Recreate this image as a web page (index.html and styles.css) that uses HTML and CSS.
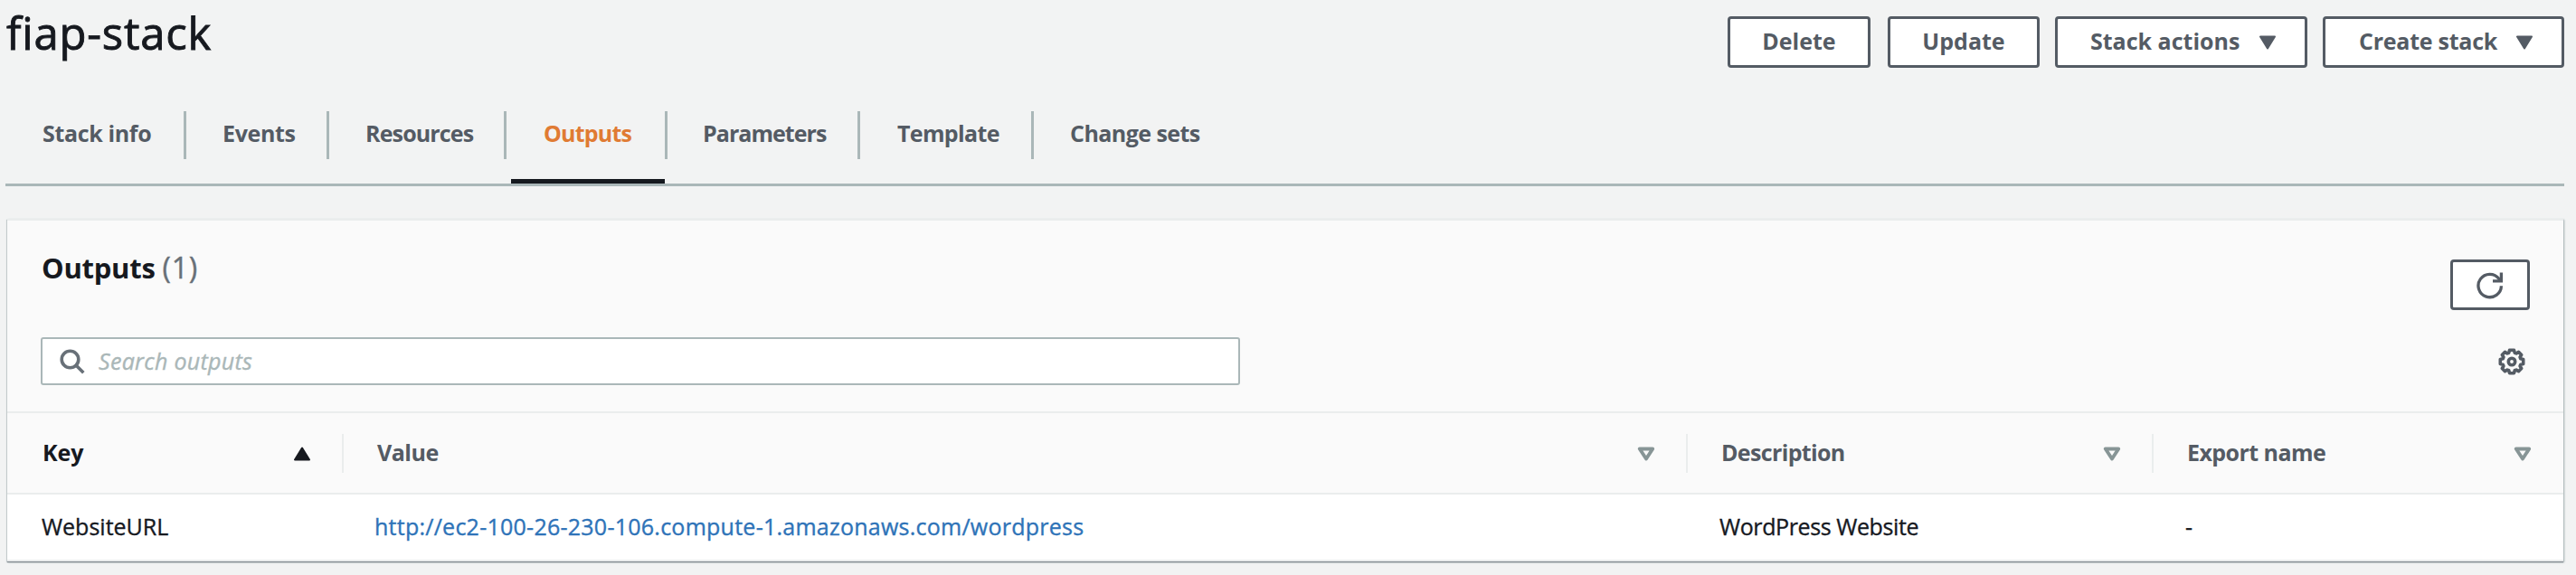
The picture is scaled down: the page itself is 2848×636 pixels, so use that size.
FILE: index.html
```html
<!DOCTYPE html>
<html lang="en">
<head>
<meta charset="utf-8">
<title>fiap-stack</title>
<link rel="stylesheet" href="styles.css">
</head>
<body>
<header class="page-header">
  <h1 class="title">fiap-stack</h1>
  <div class="actions">
    <button class="btn btn-delete">Delete</button>
    <button class="btn btn-update">Update</button>
    <button class="btn btn-menu btn-stack"><span>Stack actions</span><svg class="caret" viewBox="0 0 20 16"><path d="M2 1.500H18L10 14.500Z" fill="currentColor" stroke="currentColor" stroke-width="2" stroke-linejoin="round"/></svg></button>
    <button class="btn btn-menu btn-create"><span>Create stack</span><svg class="caret" viewBox="0 0 20 16"><path d="M2 1.500H18L10 14.500Z" fill="currentColor" stroke="currentColor" stroke-width="2" stroke-linejoin="round"/></svg></button>
  </div>
</header>
<nav class="tabs">
  <a class="tab tab-info"><span>Stack info</span></a>
  <a class="tab tab-events"><span>Events</span></a>
  <a class="tab tab-resources"><span>Resources</span></a>
  <a class="tab tab-outputs active"><span>Outputs</span></a>
  <a class="tab tab-parameters"><span>Parameters</span></a>
  <a class="tab tab-template"><span>Template</span></a>
  <a class="tab tab-changes"><span>Change sets</span></a>
</nav>
<main class="panel">
  <div class="panel-head">
    <h2 class="panel-title">Outputs <span class="count">(1)</span></h2>
    <button class="refresh" aria-label="Refresh"><svg viewBox="0 0 30 30" width="30" height="30" fill="none" stroke="currentColor" stroke-width="3.300"><path d="M27.400 15.200A12.700 12.700 0 1 1 24.800 7.300L27 10"/><path d="M27.400 0.500V9.900H18"/></svg></button>
  </div>
  <div class="filter">
    <label class="search">
      <svg viewBox="0 0 28 28" width="28" height="28" fill="none" stroke="currentColor" stroke-width="3.600"><circle cx="11.500" cy="11.500" r="9.300"/><path d="M18 18L26.300 26.300"/></svg>
      <span class="placeholder">Search outputs</span>
    </label>
    <svg class="gear" viewBox="0 0 30 30" width="30" height="30" fill="none" stroke="currentColor" stroke-width="3.600"><path stroke-linejoin="round" d="M12.500 2.300H17.500L18.200 5.200L20 5.900L22.500 4.300L25.700 7.500L24.100 10L24.800 11.800L27.700 12.500V17.500L24.800 18.200L24.100 20L25.700 22.500L22.500 25.700L20 24.100L18.200 24.800L17.500 27.700H12.500L11.800 24.800L10 24.100L7.500 25.700L4.300 22.500L5.900 20L5.200 18.200L2.300 17.500V12.500L5.200 11.800L5.900 10L4.300 7.500L7.500 4.300L10 5.900L11.800 5.200Z"/><circle cx="15" cy="15" r="3.700"/></svg>
  </div>
  <div class="row head">
    <div class="cell sorted"><span>Key</span><svg class="sort" viewBox="0 0 20 16"><path d="M2 14.500H18L10 1.500Z" fill="currentColor" stroke="currentColor" stroke-width="2" stroke-linejoin="round"/></svg></div>
    <div class="cell"><span class="h-value">Value</span><svg class="sort hollow" viewBox="0 0 20 16"><path d="M2.800 2.500H17.200L10 13.500Z"/></svg></div>
    <div class="cell"><span class="h-desc">Description</span><svg class="sort hollow" viewBox="0 0 20 16"><path d="M2.800 2.500H17.200L10 13.500Z"/></svg></div>
    <div class="cell"><span class="h-export">Export name</span><svg class="sort hollow" viewBox="0 0 20 16"><path d="M2.800 2.500H17.200L10 13.500Z"/></svg></div>
  </div>
  <div class="row body">
    <div class="cell"><span>WebsiteURL</span></div>
    <div class="cell"><a class="link">http://ec2-100-26-230-106.compute-1.amazonaws.com/wordpress</a></div>
    <div class="cell"><span class="b-desc">WordPress Website</span></div>
    <div class="cell"><span>-</span></div>
  </div>
</main>
</body>
</html>
```
FILE: styles.css
```css
* { box-sizing: border-box; }
body {
  margin: 0;
  height: 636px;
  overflow: hidden;
  padding: 0 13px 0 6px;
  background: #f2f3f3;
  color: #16191f;
  font-family: "Open Sans", "Noto Sans", sans-serif;
  font-size: 25px;
  font-variant-ligatures: none;
  white-space: nowrap;
}
button { font: inherit; color: #545b64; margin: 0; padding: 0; }
svg { display: block; flex: none; }

.page-header { display: flex; justify-content: space-between; height: 123px; }
.title {
  margin: 1px 0 0 1px;
  font-size: 49px;
  font-weight: 500;
  line-height: 70px;
  letter-spacing: 0.8px;
  -webkit-text-stroke: 0.9px currentColor;
}
.actions { display: flex; align-items: flex-start; padding-top: 18px; }
.btn {
  height: 57px;
  border: 3px solid #545b64;
  border-radius: 4px;
  background: #fff;
  font-weight: 700;
  line-height: 49px;
  padding-bottom: 2px;
}
.btn-delete { width: 158px; margin-right: 19px; }
.btn-update { width: 168px; margin-right: 17px; }
.btn-stack { width: 279px; margin-right: 17px; }
.btn-create { width: 267px; }
.btn-menu { display: flex; align-items: center; justify-content: space-between; padding: 0 31px 2px 36px; }
.btn-create { letter-spacing: -0.25px; padding-left: 37px; }
.caret { width: 20px; height: 16px; margin-top: 3px; }

.tabs { display: flex; height: 83px; border-bottom: 3px solid #aab7b8; font-weight: 700; color: #545b64; }
.tab { position: relative; height: 80px; line-height: 49px; border-bottom: 5px solid transparent; padding-left: 41px; letter-spacing: -0.55px; }
.tab::after { content: ""; position: absolute; right: -1px; top: 0; width: 3px; height: 53px; background: #aab7b8; }
.tab:last-child::after { display: none; }
.tab-info { width: 199px; letter-spacing: -0.35px; }
.tab-events { width: 158px; letter-spacing: -0.35px; }
.tab-resources { width: 196px; letter-spacing: -0.85px; }
.tab-outputs { width: 170px; margin-left: 6px; padding-left: 36px; letter-spacing: -0.8px; }
.tab-outputs::after { right: -3px; }
.tab-parameters { width: 215px; padding-left: 42px; letter-spacing: -0.95px; }
.tab-template { width: 192px; padding-left: 42px; letter-spacing: -0.65px; }
.tab.active { color: #e07b33; border-bottom-color: #16191f; }

.panel {
  margin: 36px 1px 0 2px;
  height: 379px;
  background: #fafafa;
  border-top: 2px solid #eaeded;
  box-shadow: 0 1px 1px #7f878e, 1px 1px 2px #aab7b8, -1px 1px 1px #d5dbdb;
}
.panel-head { display: flex; justify-content: space-between; height: 129px; padding: 0 37px 0 38px; }
.panel-title { margin: 29px 0 0; font-size: 31px; line-height: 46px; font-weight: 700; height: 46px; letter-spacing: -0.25px; }
.count { font-size: 32px; font-weight: 400; color: #687078; letter-spacing: 0.8px; -webkit-text-stroke: 0.4px currentColor; }
.refresh {
  display: flex;
  align-items: center;
  justify-content: center;
  width: 88px;
  height: 56px;
  margin-top: 43px;
  border: 3px solid #545b64;
  border-radius: 4px;
  background: #fff;
}
.refresh svg { margin-top: 2px; }
.filter { display: flex; justify-content: space-between; height: 82px; padding: 0 42px 0 37px; color: #545b64; }
.search {
  display: flex;
  align-items: center;
  width: 1326px;
  height: 53px;
  padding-left: 19px;
  border: 2px solid #aab7b8;
  border-radius: 3px;
  background: #fff;
  color: #687078;
}
.placeholder { margin: -1px 0 0 15px; font-style: italic; letter-spacing: 0.3px; color: #aab7b8; -webkit-text-stroke: 0.4px currentColor; }
.gear { margin-top: 12px; }

.row { display: grid; grid-template-columns: 372px 1486px 515px 1fr; }
.head { height: 92px; border-top: 2px solid #eaeded; border-bottom: 2px solid #eaeded; font-weight: 700; color: #545b64; padding-top: 23px; }
.head .cell { display: flex; align-items: center; justify-content: space-between; height: 43px; padding: 0 34px 0 37px; border-right: 2px solid #eaeded; }
.head .cell span { margin-top: -4px; }
.head .cell:first-child { padding-left: 39px; }
.head .cell:last-child { border-right: 0; padding-right: 35px; }
.h-value { letter-spacing: -0.5px; }
.h-desc { letter-spacing: -0.65px; }
.h-export { letter-spacing: -0.55px; }
.sorted { color: #16191f; }
.sort { width: 20px; height: 16px; }
.hollow { fill: #fafafa; stroke: #879596; stroke-width: 3.9; stroke-linejoin: round; }
.body { height: 74px; background: #fff; border-bottom: 2px solid #eaeded; line-height: 70px; -webkit-text-stroke: 0.35px currentColor; }
.body .cell { padding-left: 35px; }
.body .cell:first-child { padding-left: 38px; }
.body .cell:nth-child(2) { padding-left: 34px; }
.link { color: #2e73b8; letter-spacing: 0.25px; }
.b-desc { letter-spacing: -0.4px; }
```
